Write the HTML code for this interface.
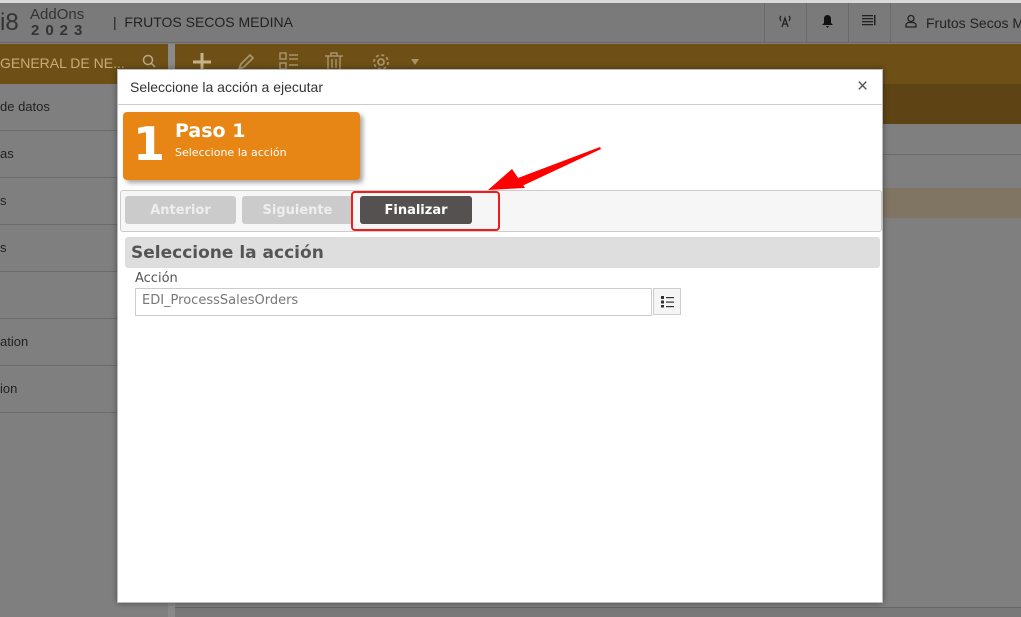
<!DOCTYPE html>
<html><head><meta charset="utf-8"><style>
*{box-sizing:border-box;margin:0;padding:0}
body{width:1021px;height:617px;overflow:hidden;background:#7f7f7f;font-family:"Liberation Sans",sans-serif;position:relative}
.a{position:absolute;white-space:nowrap}
</style></head><body>
<div class="a" style="left:0;top:0;width:1021px;height:3px;background:#d9d9d9"></div>
<div class="a" style="left:0;top:3px;width:1021px;height:40px;background:#7a7a7a;border-bottom:1px solid #6a6a6a"></div>
<div class="a" style="left:0;top:9px;font-size:24px;color:#333">i8</div>
<div class="a" style="left:30px;top:7px;font-size:15px;color:#333;line-height:15px">AddOns</div>
<div class="a" style="left:31px;top:22px;font-size:15px;color:#333;font-weight:bold;letter-spacing:6px">2023</div>
<div class="a" style="left:113px;top:14px;font-size:14px;color:#222">|&nbsp; FRUTOS SECOS MEDINA</div>
<div class="a" style="left:764px;top:3px;width:1px;height:40px;background:#6a6a6a"></div>
<div class="a" style="left:806px;top:3px;width:1px;height:40px;background:#6a6a6a"></div>
<div class="a" style="left:848px;top:3px;width:1px;height:40px;background:#6a6a6a"></div>
<div class="a" style="left:890px;top:3px;width:1px;height:40px;background:#6a6a6a"></div>
<svg class="a" style="left:778px;top:14px" width="14" height="14"><g stroke="#222" fill="none" stroke-width="1.3"><path d="M4 13L7 4L10 13M5 10H9"/><path d="M3 2Q1 4 3 7M11 2Q13 4 11 7"/></g></svg>
<svg class="a" style="left:821px;top:14px" width="13" height="14"><path d="M6.5 1C4 1 3 3 3 5V9L1 11H12L10 9V5C10 3 9 1 6.5 1ZM5 12H8L6.5 14Z" fill="#111"/></svg>
<svg class="a" style="left:862px;top:15px" width="14" height="12"><g fill="#222"><rect y="0" width="11" height="1.3"/><rect y="3" width="11" height="1.3"/><rect y="6" width="11" height="1.3"/><rect y="9" width="11" height="1.3"/><rect x="12" y="0" width="1.5" height="10.3"/></g></svg>
<svg class="a" style="left:905px;top:14px" width="12" height="14"><g stroke="#222" fill="none" stroke-width="1.3"><circle cx="6" cy="4.5" r="3"/><path d="M1 13V11Q1 9 4 8.5H8Q11 9 11 11V13Z"/></g></svg>
<div class="a" style="left:926px;top:15px;font-size:14px;color:#222">Frutos Secos Me</div>
<div class="a" style="left:0;top:44px;width:1021px;height:40px;background:#6e5016"></div>
<div class="a" style="left:168px;top:44px;width:7px;height:573px;background:#8a8a8a"></div>
<div class="a" style="left:0;top:55px;font-size:14px;color:#c9ab7a">GENERAL DE NE...</div>
<svg class="a" style="left:142px;top:54px" width="14" height="14"><g stroke="#b8a888" stroke-width="1.5" fill="none"><circle cx="6" cy="6" r="4.5"/><path d="M9 9L13 13"/></g></svg>
<svg class="a" style="left:192px;top:52px" width="20" height="20"><path d="M10 1V19M1 10H19" stroke="#c9b38a" stroke-width="3"/></svg>
<svg class="a" style="left:236px;top:52px" width="20" height="20"><path d="M3 17L5 12L14 3L17 6L8 15Z" stroke="#a8936a" stroke-width="1.8" fill="none"/></svg>
<svg class="a" style="left:279px;top:52px" width="20" height="20"><g fill="none" stroke="#a8936a" stroke-width="1.5"><rect x="1" y="1" width="6" height="6"/><rect x="1" y="11" width="6" height="6"/><path d="M10 3H19M10 7H19M10 13H19"/></g></svg>
<svg class="a" style="left:324px;top:52px" width="20" height="20"><g fill="none" stroke="#a8936a" stroke-width="1.5"><path d="M1 4H19M7 4V1H13V4M4 4V19H16V4M8 7V16M12 7V16"/></g></svg>
<svg class="a" style="left:371px;top:52px" width="20" height="20"><g fill="none" stroke="#a8936a" stroke-width="1.8"><circle cx="10" cy="10" r="3"/><circle cx="10" cy="10" r="7" stroke-dasharray="3 2.5"/></g></svg>
<svg class="a" style="left:410px;top:58px" width="10" height="8"><path d="M1 1H9L5 7Z" fill="#a8936a"/></svg>
<div class="a" style="left:0;top:99px;font-size:13px;color:#222">de datos</div>
<div class="a" style="left:0;top:146px;font-size:13px;color:#222">as</div>
<div class="a" style="left:0;top:193px;font-size:13px;color:#222">s</div>
<div class="a" style="left:0;top:240px;font-size:13px;color:#222">s</div>
<div class="a" style="left:0;top:334px;font-size:13px;color:#222">ation</div>
<div class="a" style="left:0;top:381px;font-size:13px;color:#222">ion</div>
<div class="a" style="left:0;top:130px;width:168px;height:1px;background:#6c6c6c"></div>
<div class="a" style="left:0;top:177px;width:168px;height:1px;background:#6c6c6c"></div>
<div class="a" style="left:0;top:224px;width:168px;height:1px;background:#6c6c6c"></div>
<div class="a" style="left:0;top:271px;width:168px;height:1px;background:#6c6c6c"></div>
<div class="a" style="left:0;top:318px;width:168px;height:1px;background:#6c6c6c"></div>
<div class="a" style="left:0;top:365px;width:168px;height:1px;background:#6c6c6c"></div>
<div class="a" style="left:0;top:412px;width:168px;height:1px;background:#6c6c6c"></div>
<div class="a" style="left:175px;top:84px;width:846px;height:40px;background:#5e4415"></div>
<div class="a" style="left:175px;top:154px;width:846px;height:1px;background:#6c6c6c"></div>
<div class="a" style="left:175px;top:188px;width:846px;height:30px;background:#807562"></div>
<div class="a" style="left:175px;top:607px;width:846px;height:1px;background:#666"></div>
<div class="a" style="left:175px;top:608px;width:846px;height:9px;background:#797979"></div>
<!-- modal -->
<div class="a" style="left:117px;top:69px;width:766px;height:534px;background:#fff;border:1px solid #bbb;box-shadow:0 0 6px rgba(0,0,0,.4)"></div>
<div class="a" style="left:130px;top:79px;font-size:14px;color:#333">Seleccione la acción a ejecutar</div>
<div class="a" style="left:857px;top:76px;font-size:19px;color:#555">×</div>
<div class="a" style="left:118px;top:104px;width:764px;height:1px;background:#ccc"></div>
<div class="a" style="left:123px;top:112px;width:237px;height:68px;background:#e88615;border-radius:4px;box-shadow:3px 3px 5px rgba(0,0,0,.35)"></div>
<div class="a" style="left:133px;top:117px;font-size:46px;font-weight:bold;color:#fff;font-family:'DejaVu Sans',sans-serif">1</div>
<div class="a" style="left:175px;top:120px;font-size:19px;font-weight:bold;color:#fff;font-family:'DejaVu Sans',sans-serif">Paso 1</div>
<div class="a" style="left:175px;top:146px;font-size:11px;color:#fff;font-family:'DejaVu Sans',sans-serif">Seleccione la acción</div>
<div class="a" style="left:120px;top:190px;width:762px;height:42px;background:#f6f6f6;border:1px solid #ccc;border-radius:3px"></div>
<div class="a" style="left:125px;top:196px;width:111px;height:28px;background:#cbcbcb;border-radius:3px;color:#eee;font:bold 13px 'DejaVu Sans',sans-serif;text-align:center;line-height:29px">Anterior</div>
<div class="a" style="left:242px;top:196px;width:111px;height:28px;background:#cbcbcb;border-radius:3px;color:#eee;font:bold 13px 'DejaVu Sans',sans-serif;text-align:center;line-height:29px">Siguiente</div>
<div class="a" style="left:360px;top:196px;width:112px;height:28px;background:#565151;border-radius:3px;color:#fff;font:bold 13px 'DejaVu Sans',sans-serif;text-align:center;line-height:29px">Finalizar</div>
<div class="a" style="left:351px;top:191px;width:149px;height:40px;border:2px solid #ee1c1c;border-radius:4px"></div>
<div class="a" style="left:125px;top:237px;width:755px;height:31px;background:#dedede;border-radius:3px"></div>
<div class="a" style="left:131px;top:243px;font:bold 17px 'DejaVu Sans',sans-serif;color:#555">Seleccione la acción</div>
<div class="a" style="left:135px;top:271px;font:13px 'DejaVu Sans',sans-serif;color:#555">Acción</div>
<div class="a" style="left:135px;top:288px;width:517px;height:28px;border:1px solid #ccc;font:13px 'DejaVu Sans',sans-serif;color:#777;padding:4px 6px">EDI_ProcessSalesOrders</div>
<div class="a" style="left:653px;top:288px;width:28px;height:27px;border:1px solid #ccc;background:#f5f5f5"></div>
<svg class="a" style="left:660px;top:294px" width="16" height="14"><g fill="#333"><rect x="1" y="2" width="3" height="3"/><rect x="1" y="6.5" width="3" height="3"/><rect x="1" y="11" width="3" height="2.5"/><rect x="6" y="3" width="8" height="1.2"/><rect x="6" y="7.5" width="8" height="1.2"/><rect x="6" y="12" width="8" height="1.2"/></g></svg>
<svg class="a" style="left:480px;top:140px" width="130" height="60"><polygon points="120,7 38,38 42,46 121,9" fill="#f00"/><polygon points="8,50 32,29 45,48" fill="#f00"/></svg>
</body></html>
